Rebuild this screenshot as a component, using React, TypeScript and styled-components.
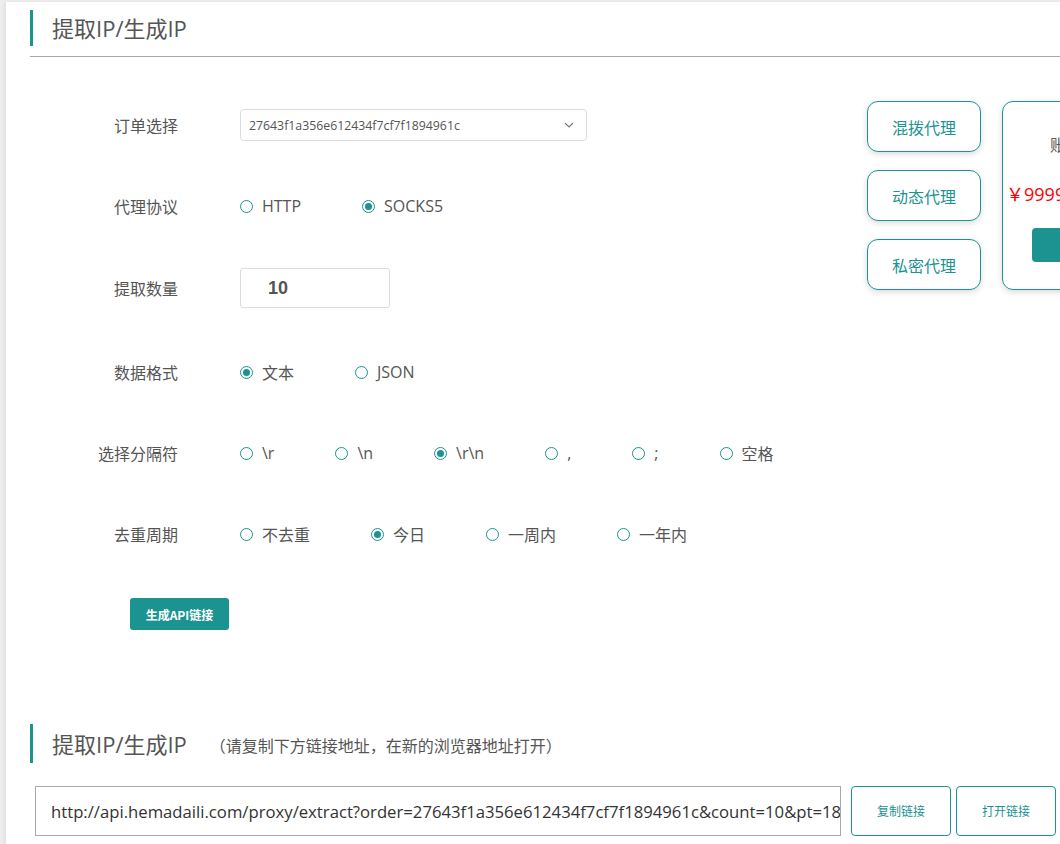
import React from "react";
import styled, { createGlobalStyle } from "styled-components";

const TEAL = "#1a9391";

const Global = createGlobalStyle`
  html, body { margin: 0; padding: 0; overflow: hidden; }
  body {
    background: #eeeeee;
    font-family: "Open Sans", "Noto Sans CJK SC", sans-serif;
    color: #555;
  }
`;

const Page = styled.div`
  width: 1300px;
  padding: 2px 0 0 6px;
`;

const Panel = styled.div`
  background: #fff;
  padding: 8px 0 40px 24px;
  box-shadow: -2px 0 4px rgba(0, 0, 0, 0.06);
  min-height: 900px;
`;

const Heading = styled.div<{ $h?: number }>`
  display: flex;
  align-items: center;
  height: ${(p) => p.$h ?? 36}px;
  border-left: 3px solid ${TEAL};
  padding-left: 19px;
`;

const HeadTitle = styled.h2`
  margin: 0;
  font-size: 22px;
  font-weight: 400;
  color: #555;
  line-height: 1;
`;

const HeadNote = styled.span`
  margin-left: 23px;
  font-size: 16px;
  color: #555;
  padding-top: 2px;
`;

const Divider = styled.div`
  height: 1px;
  background: #aaa;
  margin-top: 10px;
`;

const Main = styled.div`
  display: flex;
  align-items: flex-start;
`;

const Form = styled.div`
  display: flex;
  flex-direction: column;
  margin-top: 48px;
  width: 837px;
`;

const Row = styled.div<{ $gap?: number }>`
  display: flex;
  align-items: center;
  height: 40px;
  margin-bottom: ${(p) => p.$gap ?? 41}px;
`;

const Label = styled.div`
  width: 148px;
  margin-right: 62px;
  text-align: right;
  font-size: 16px;
  color: #555;
`;

const Select = styled.div`
  width: 347px;
  height: 32px;
  box-sizing: border-box;
  border: 1px solid #dcdcdc;
  border-radius: 4px;
  display: flex;
  align-items: center;
  justify-content: space-between;
  padding: 0 12px 0 8px;
  font-size: 12.3px;
  color: #555;
`;

const Radio = styled.label`
  display: flex;
  align-items: center;
  margin-right: 61px;
  font-size: 16px;
  color: #555;
  cursor: pointer;
`;

const Dot = styled.span<{ $on?: boolean }>`
  width: 13px;
  height: 13px;
  box-sizing: border-box;
  border: 1px solid ${TEAL};
  border-radius: 50%;
  margin-right: 9px;
  display: flex;
  align-items: center;
  justify-content: center;
  &::after {
    content: "";
    width: 7px;
    height: 7px;
    border-radius: 50%;
    background: ${(p) => (p.$on ? TEAL : "transparent")};
  }
`;

const NumInput = styled.div`
  width: 150px;
  height: 40px;
  box-sizing: border-box;
  border: 1px solid #dcdcdc;
  border-radius: 3px;
  padding-left: 27px;
  display: flex;
  align-items: center;
  font-size: 18px;
  font-weight: 700;
  color: #555;
  font-family: "Liberation Sans", Arial, sans-serif;
`;

const GenButton = styled.button`
  margin-left: 100px;
  width: 99px;
  height: 32px;
  border: none;
  border-radius: 3px;
  background: ${TEAL};
  color: #fff;
  font-size: 12px;
  font-weight: 600;
  font-family: "Noto Sans CJK SC", sans-serif;
  padding: 0;
`;

const Side = styled.div`
  display: flex;
  gap: 21px;
  margin-top: 44px;
`;

const QuickCol = styled.div`
  display: flex;
  flex-direction: column;
  gap: 18px;
`;

const QuickBtn = styled.div`
  width: 114px;
  height: 51px;
  box-sizing: border-box;
  border: 1px solid ${TEAL};
  border-radius: 11px;
  box-shadow: 0 2px 6px rgba(0, 0, 0, 0.15);
  display: flex;
  align-items: center;
  justify-content: center;
  color: ${TEAL};
  font-size: 16px;
`;

const Card = styled.div`
  width: 160px;
  height: 189px;
  box-sizing: border-box;
  border: 1px solid ${TEAL};
  border-radius: 11px;
  box-shadow: 0 2px 6px rgba(0, 0, 0, 0.15);
  display: flex;
  flex-direction: column;
  align-items: center;
  padding-top: 30px;
`;

const CardTitle = styled.div`
  font-size: 16px;
  color: #555;
`;

const Price = styled.div`
  align-self: flex-start;
  margin: 24px 0 0 3px;
  font-size: 18px;
  color: #f00;
`;

const CardBtn = styled.div`
  margin-top: 22px;
  width: 100px;
  height: 34px;
  border-radius: 4px;
  background: ${TEAL};
  color: #fff;
  display: flex;
  align-items: center;
  justify-content: center;
  font-size: 14px;
`;

const Second = styled.div`
  margin-top: 94px;
`;

const UrlRow = styled.div`
  display: flex;
  gap: 5px;
  margin: 23px 0 0 5px;
`;

const UrlBox = styled.div`
  width: 806px;
  height: 50px;
  box-sizing: border-box;
  border: 1px solid #aaa;
  padding-left: 15px;
  margin-right: 5px;
  display: flex;
  align-items: center;
  overflow: hidden;
  white-space: nowrap;
  font-size: 16.7px;
  color: #333;
`;

const LinkBtn = styled.div`
  width: 100px;
  height: 50px;
  box-sizing: border-box;
  border: 1px solid ${TEAL};
  border-radius: 4px;
  display: flex;
  align-items: center;
  justify-content: center;
  font-size: 12px;
  color: ${TEAL};
`;

const Chevron = () => (
  <svg width="10" height="6" viewBox="0 0 10 6" fill="none">
    <path d="M1 1l4 4 4-4" stroke="#777" strokeWidth="1.1" />
  </svg>
);

type Opt = { label: string; on?: boolean };
const Radios = ({ items }: { items: Opt[] }) => (
  <>
    {items.map((o) => (
      <Radio key={o.label}>
        <Dot $on={o.on} />
        {o.label}
      </Radio>
    ))}
  </>
);

export default function App() {
  return (
    <>
      <Global />
      <Page>
        <Panel>
          <Heading>
            <HeadTitle>提取IP/生成IP</HeadTitle>
          </Heading>
          <Divider />
          <Main>
            <Form>
              <Row>
                <Label>订单选择</Label>
                <Select>
                  <span>27643f1a356e612434f7cf7f1894961c</span>
                  <Chevron />
                </Select>
              </Row>
              <Row $gap={42}>
                <Label>代理协议</Label>
                <Radios items={[{ label: "HTTP" }, { label: "SOCKS5", on: true }]} />
              </Row>
              <Row $gap={44}>
                <Label>提取数量</Label>
                <NumInput>10</NumInput>
              </Row>
              <Row>
                <Label>数据格式</Label>
                <Radios items={[{ label: "文本", on: true }, { label: "JSON" }]} />
              </Row>
              <Row>
                <Label>选择分隔符</Label>
                <Radios
                  items={[
                    { label: "\\r" },
                    { label: "\\n" },
                    { label: "\\r\\n", on: true },
                    { label: " , " },
                    { label: " ; " },
                    { label: "空格" },
                  ]}
                />
              </Row>
              <Row $gap={44}>
                <Label>去重周期</Label>
                <Radios
                  items={[
                    { label: "不去重" },
                    { label: "今日", on: true },
                    { label: "一周内" },
                    { label: "一年内" },
                  ]}
                />
              </Row>
              <div>
                <GenButton>生成API链接</GenButton>
              </div>
            </Form>
            <Side>
              <QuickCol>
                <QuickBtn>混拨代理</QuickBtn>
                <QuickBtn>动态代理</QuickBtn>
                <QuickBtn>私密代理</QuickBtn>
              </QuickCol>
              <Card>
                <CardTitle>账户余额</CardTitle>
                <Price>￥9999.00</Price>
                <CardBtn>充值</CardBtn>
              </Card>
            </Side>
          </Main>
          <Second>
            <Heading $h={39}>
              <HeadTitle>提取IP/生成IP</HeadTitle>
              <HeadNote>（请复制下方链接地址，在新的浏览器地址打开）</HeadNote>
            </Heading>
            <UrlRow>
              <UrlBox>
                http://api.hemadaili.com/proxy/extract?order=27643f1a356e612434f7cf7f1894961c&amp;count=10&amp;pt=18&amp;format=1&amp;sep=3
              </UrlBox>
              <LinkBtn>复制链接</LinkBtn>
              <LinkBtn>打开链接</LinkBtn>
            </UrlRow>
          </Second>
        </Panel>
      </Page>
    </>
  );
}
